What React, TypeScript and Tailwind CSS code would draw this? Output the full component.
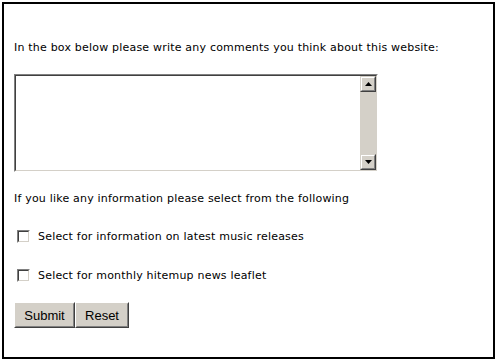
import { useState } from "react"

// Classic sunken / raised borders, drawn with two nested borders
function ScrollArrow({ dir }: { dir: "up" | "down" }) {
  return (
    <div className="h-4 w-4 border border-t-[#d4d0c8] border-l-[#d4d0c8] border-r-[#404040] border-b-[#404040] bg-[#d4d0c8]">
      <div className="flex h-full w-full items-center justify-center border border-t-white border-l-white border-r-[#808080] border-b-[#808080]">
        <svg width="7" height="4" viewBox="0 0 7 4">
          {dir === "up" ? (
            <path d="M3.5 0 L7 4 L0 4 Z" fill="#000" />
          ) : (
            <path d="M0 0 L7 0 L3.5 4 Z" fill="#000" />
          )}
        </svg>
      </div>
    </div>
  )
}

function Checkbox({ checked, onChange }: { checked: boolean; onChange: () => void }) {
  return (
    <span className="relative ml-[3px] inline-block h-[13px] w-[13px] shrink-0 border border-t-[#808080] border-l-[#808080] border-r-white border-b-white">
      <input
        type="checkbox"
        checked={checked}
        onChange={onChange}
        className="block h-full w-full cursor-pointer appearance-none border border-t-[#404040] border-l-[#404040] border-r-[#d4d0c8] border-b-[#d4d0c8] bg-white checked:bg-white"
      />
      {checked && (
        <svg className="pointer-events-none absolute left-[2px] top-[2px]" width="7" height="7" viewBox="0 0 7 7">
          <path d="M0 3 L2 5 L7 0" stroke="#000" strokeWidth="1.6" fill="none" />
        </svg>
      )}
    </span>
  )
}

function Button({ label, w }: { label: string; w: string }) {
  return (
    <button
      type="button"
      className={`h-[26px] ${w} border border-t-white border-l-white border-r-[#404040] border-b-[#404040] bg-[#d4d0c8] p-0`}
    >
      <span className="flex h-full w-full items-center justify-center border border-t-[#d4d0c8] border-l-[#d4d0c8] border-r-[#808080] border-b-[#808080] font-['Liberation_Sans',Arial,sans-serif] text-[13px] leading-none tracking-normal text-black">
        {label}
      </span>
    </button>
  )
}

export default function App() {
  const [comments, setComments] = useState("")
  const [music, setMusic] = useState(false)
  const [leaflet, setLeaflet] = useState(false)

  return (
    <div className="bg-white p-[2px]">
      <form className="flex h-[357px] w-[493px] flex-col border-2 border-black bg-white pl-[10px] pt-[37px] font-['DejaVu_Sans',Verdana,sans-serif] text-[11px] leading-[13px] tracking-[0.2px] text-black">
        <p>In the box below please write any comments you think about this website:</p>

        <div className="mt-[20px] h-[98px] w-[364px] border border-t-[#808080] border-l-[#808080] border-r-white border-b-white">
          <div className="flex h-full w-full border border-t-[#404040] border-l-[#404040] border-r-[#d4d0c8] border-b-[#d4d0c8]">
            <textarea
              value={comments}
              onChange={e => setComments(e.target.value)}
              className="h-full flex-1 resize-none border-0 bg-white p-[2px] text-[13px] outline-none"
            />
            <div className="flex w-4 flex-col bg-[#d4d0c8]">
              <ScrollArrow dir="up" />
              <div className="flex-1" />
              <ScrollArrow dir="down" />
            </div>
          </div>
        </div>

        <p className="mt-[20px]">If you like any information please select from the following</p>

        <label className="mt-[25px] flex h-[13px] items-center gap-[8px]">
          <Checkbox checked={music} onChange={() => setMusic(!music)} />
          <span>Select for information on latest music releases</span>
        </label>

        <label className="mt-[26px] flex h-[13px] items-center gap-[8px]">
          <Checkbox checked={leaflet} onChange={() => setLeaflet(!leaflet)} />
          <span>Select for monthly hitemup news leaflet</span>
        </label>

        <div className="mt-[20px] flex">
          <Button label="Submit" w="w-[61px]" />
          <Button label="Reset" w="w-[54px]" />
        </div>
      </form>
    </div>
  )
}
